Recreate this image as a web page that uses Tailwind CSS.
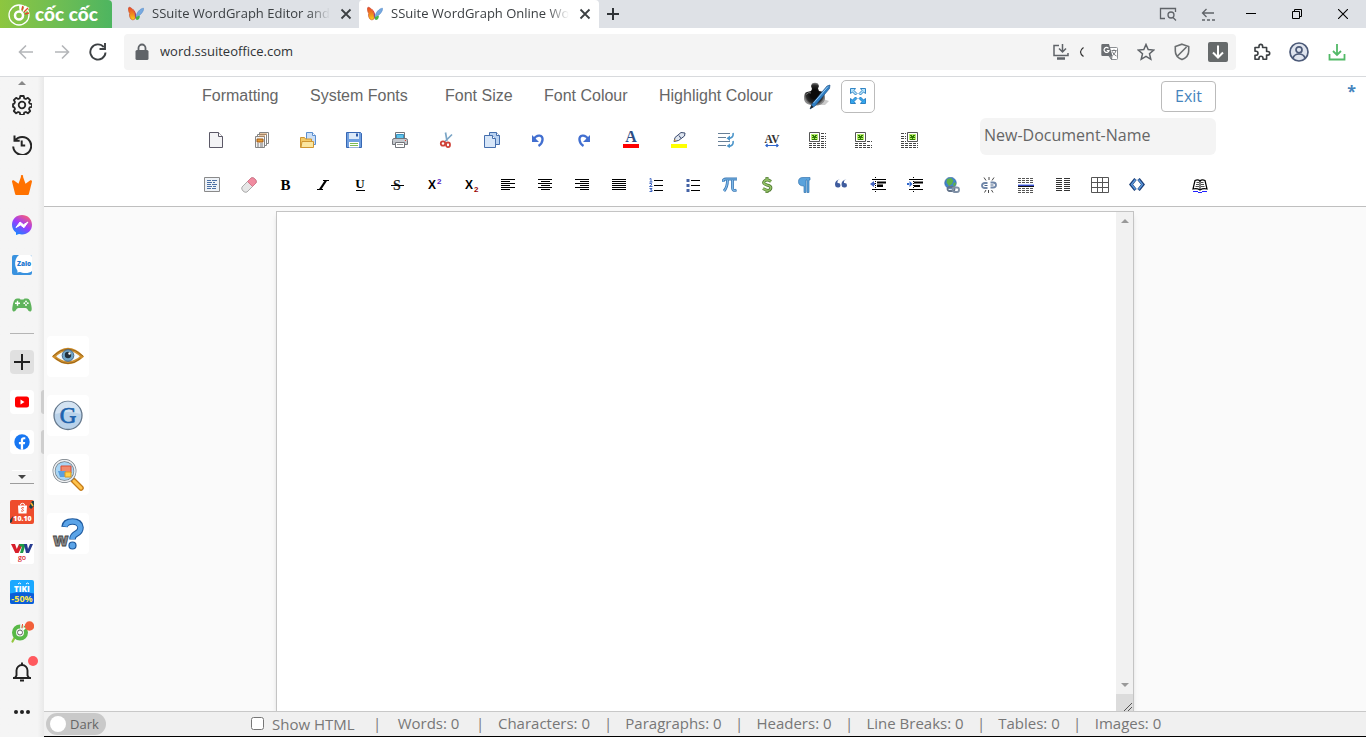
<!DOCTYPE html>
<html lang="en">
<head>
    <meta charset="UTF-8">
    <meta name="viewport" content="width=device-width, initial-scale=1.0">
    <title>SSuite WordGraph Online Word Processor</title>
    <script src="https://cdn.jsdelivr.net/npm/@tailwindcss/browser@4"></script>
</head>
<body class="flex flex-col h-screen overflow-hidden bg-white font-['Open_Sans',sans-serif] text-[#3c4043]">

<!-- Shared symbols -->
<svg class="absolute size-0" aria-hidden="true">
    <defs>
        <linearGradient id="wing" x1="0" y1="0" x2="0" y2="1"><stop offset="0" stop-color="#e8452a"/><stop offset=".55" stop-color="#f28a1e"/><stop offset="1" stop-color="#f8d21c"/></linearGradient>
    </defs>
    <symbol id="butterfly" viewBox="0 0 16 16">
        <path d="M7.500 12C7 6 4.500 1.500 1.200 1.200 0 1.200.2 5 1.700 7.500 1 9 1.800 13.500 4.500 13.800 6 13.900 7 13 7.500 12z" fill="url(#wing)" stroke="#c2462b" stroke-width=".6"/>
        <path d="M5.500 3.500C7.500 5 8.300 8 7.800 11 7 8 6.500 6 4.500 3z" fill="#e8452a"/>
        <path d="M8 11C8.500 6.500 12 2.500 15.500 2.200 16 5 13 8.500 11 9.500z" fill="#76a9e0" stroke="#4b83c4" stroke-width=".5"/>
        <path d="M8 11l3.500-1.500c1 1.500-.5 4.500-2.500 4.500-1 0-1.300-1.500-1-3z" fill="#43b649"/>
        <path d="M6.800 6C8 8 8.300 11 7.500 13.500 7.200 11 7.200 8.500 6.800 6z" fill="#7a2f86"/>
    </symbol>
    <symbol id="picture" viewBox="0 0 11 10">
        <path d="M.5.5h10v9H.5z" fill="#fff" stroke="#555"/>
        <path d="M2 2h7v6H2z" fill="#b6ec6a"/>
        <path d="M3 3h2v1H3zM6 3h2v1H6zM4 4h3v1H4zM3 5h5v1H3zM5 6h1v1H5zM3 7h5v1H3z" fill="#2d7a00"/>
    </symbol>
</svg>

<!-- Tab strip -->
<div class="flex h-7 shrink-0 bg-[#dee1e6]">
    <a href="#" class="flex items-center w-28 pl-2 gap-[3px] rounded-tr bg-linear-to-r from-[#8dc63f] to-[#4db560] text-white">
        <svg class="size-6 shrink-0" viewBox="0 0 24 24" fill="none">
            <circle cx="11" cy="13" r="10" stroke="#fff" stroke-width="1.300"/>
            <circle cx="11" cy="13.500" r="4" stroke="#fff" stroke-width="2.500"/>
            <path d="M11.500 9L11 3l3 .3-.6 5.700zM14.500 9.500L17 3.500l4.500 2.500-4 4.500z" fill="#fff"/>
            <path d="M14 8l1-4M16 10l4-4M17 12l4-1" stroke="#e8452a" stroke-width="1.400"/>
        </svg>
        <span class="font-['Lato',sans-serif] font-black text-[19px] leading-7">cốc cốc</span>
    </a>
    <div class="flex items-center w-[247px] pl-4 pr-px">
        <svg class="size-4 shrink-0"><use href="#butterfly"/></svg>
        <span class="ml-2 flex-1 overflow-hidden whitespace-nowrap text-[13px] mask-r-from-88% mask-r-to-100%">SSuite WordGraph Editor and</span>
        <button aria-label="Close tab" class="flex justify-center w-6 ml-1">
            <svg class="size-3" viewBox="0 0 12 12" stroke="#3c4043" stroke-width="1.800"><path d="M1.500 1.500l9 9M10.500 1.500l-9 9"/></svg>
        </button>
    </div>
    <div class="flex items-center w-60 pl-2 pr-0.5 rounded-t bg-white">
        <svg class="size-4 shrink-0"><use href="#butterfly"/></svg>
        <span class="ml-2 flex-1 overflow-hidden whitespace-nowrap text-[13px] mask-r-from-88% mask-r-to-100%">SSuite WordGraph Online Wo</span>
        <button aria-label="Close tab" class="flex justify-center w-6 ml-1">
            <svg class="size-3" viewBox="0 0 12 12" stroke="#3c4043" stroke-width="1.800"><path d="M1.500 1.500l9 9M10.500 1.500l-9 9"/></svg>
        </button>
    </div>
    <button aria-label="New tab" class="flex items-center justify-center w-7">
        <svg class="size-3" viewBox="0 0 12 12" stroke="#2f3337" stroke-width="2"><path d="M6 0v12M0 6h12"/></svg>
    </button>
    <div class="flex ml-auto">
        <button aria-label="Search tabs" class="flex items-center justify-center w-10">
            <svg class="w-[18px] h-3.5" viewBox="0 0 18 14" fill="none" stroke="#5f6368" stroke-width="1.300"><path d="M6 11.500H1.500v-10h15V5"/><circle cx="12" cy="8" r="3"/><path d="M14 10.500L17 13.500"/></svg>
        </button>
        <button aria-label="Reopen tab" class="flex items-center justify-center w-10">
            <svg class="w-3.5 h-3.5" viewBox="0 0 14 14" fill="none" stroke="#5f6368" stroke-width="1.300"><path d="M13 6H1.500M5.500 2l-4 4 4 4"/><path d="M1 13h13" stroke-dasharray="3 2"/></svg>
        </button>
        <button aria-label="Minimize" class="flex items-center justify-center w-[46px]">
            <svg class="size-2.5" viewBox="0 0 10 10" stroke="#000"><path d="M0 4.500h10"/></svg>
        </button>
        <button aria-label="Restore" class="flex items-center justify-center w-[46px]">
            <svg class="size-2.5" viewBox="0 0 10 10" fill="none" stroke="#000"><path d="M.5 2.500h7v7h-7zM2.500 2.500v-2h7v7h-2"/></svg>
        </button>
        <button aria-label="Close" class="flex items-center justify-center w-[46px]">
            <svg class="size-2.5" viewBox="0 0 10 10" stroke="#000" stroke-width="1.100"><path d="M0 0l10 10M10 0L0 10"/></svg>
        </button>
    </div>
</div>

<!-- Address bar -->
<div class="flex items-center h-[49px] shrink-0 pl-2 pr-2.5 border-b border-[#d8dadd]">
    <button aria-label="Back" class="flex justify-center w-9"><svg class="size-4" viewBox="0 0 16 16" fill="none" stroke="#b4b6b9" stroke-width="1.600"><path d="M15 8H2M8 1.500L1.500 8 8 14.500"/></svg></button>
    <button aria-label="Forward" class="flex justify-center w-9"><svg class="size-4" viewBox="0 0 16 16" fill="none" stroke="#b4b6b9" stroke-width="1.600"><path d="M1 8h13M8 1.500L14.500 8 8 14.500"/></svg></button>
    <button aria-label="Reload" class="flex justify-center w-9"><svg class="size-[18px]" viewBox="0 0 18 18" fill="none" stroke="#3c4043" stroke-width="1.900"><path d="M16.500 9.500A7.600 7.600 0 1 1 14.800 4.200"/><path d="M16 0v6H10.500" /></svg></button>
    <div class="flex flex-1 items-center h-9 ml-2 pl-2.5 rounded bg-[#f4f4f4]">
        <svg class="w-4 h-[18px] shrink-0" viewBox="0 0 16 18"><path d="M4.500 8V5a3.500 3.500 0 0 1 7 0v3" fill="none" stroke="#5f6368" stroke-width="1.800"/><rect x="1.500" y="7" width="13" height="10" rx="1.500" fill="#5f6368"/></svg>
        <input type="text" aria-label="Address" value="word.ssuiteoffice.com" class="flex-1 min-w-0 ml-2.5 text-[13px] text-[#303336] outline-none">
        <button aria-label="Install app" class="flex justify-center w-[22px]"><svg class="size-4" viewBox="0 0 16 16" fill="none" stroke="#5f6368" stroke-width="1.500"><path d="M6 1.500H1v10h14V9M9.500 0v7.500M6 4.500L9.500 8 13 4.500"/><path d="M4 14.500h8" stroke-width="2.500"/></svg></button>
        <span class="w-5 pl-[7px]"><svg class="w-[5px] h-2.5" viewBox="0 0 5 10" fill="none" stroke="#333" stroke-width="1.200"><path d="M4.500.5Q-1.500 5 4.500 9.500"/></svg></span>
        <button aria-label="Translate" class="flex justify-center w-9"><svg class="size-[18px]" viewBox="0 0 18 18"><path d="M6.500 4.500h9a1 1 0 0 1 1 1v10a1 1 0 0 1-1 1h-5z" fill="#fff" stroke="#8b8e92"/><path d="M1.500 1H8l3.500 12h-10A1.200 1.200 0 0 1 .3 11.800V2.200A1.200 1.200 0 0 1 1.500 1z" fill="#6b6e72"/><path d="M7.500 5.300A2.500 2.500 0 1 0 8 7.500H5.800" fill="none" stroke="#fff" stroke-width="1.200"/><path d="M10.500 7.500h5M13 6.500v1M15 7.500c-.5 2-2 4-3.500 5M11.500 8.500c.5 2 2 3.500 4 4.500M8 13l2.500 3.500.5-3.500z" fill="none" stroke="#777a7e"/></svg></button>
        <button aria-label="Bookmark" class="flex justify-center w-9"><svg class="size-[18px]" viewBox="0 0 18 18" fill="none" stroke="#5f6368" stroke-width="1.500"><path d="M9 1.500l2.200 5.100 5.500.5-4.200 3.700 1.300 5.500L9 13.400l-4.800 2.900 1.300-5.500L1.300 7.100l5.500-.5z"/></svg></button>
        <button aria-label="Ad blocker" class="flex justify-center w-9"><svg class="size-[18px]" viewBox="0 0 18 18" fill="none" stroke="#6b6e70" stroke-width="1.600"><path d="M9 1.200l6.700 2.300V8c0 4-2.800 7-6.700 8.600C5.100 15 2.300 12 2.300 8V3.500zM4.500 13L13.500 4"/></svg></button>
        <button aria-label="Download media" class="flex justify-center w-9"><svg class="size-5" viewBox="0 0 20 20" fill="none" stroke="#fff" stroke-width="2"><rect width="20" height="20" rx="2" fill="#666a6b" stroke="none"/><path d="M10 3.500v12M5 10.500l5 5 5-5"/></svg></button>
    </div>
    <button aria-label="Extensions" class="flex justify-center w-9 ml-2"><svg class="size-[18px]" viewBox="0 0 18 18" fill="none" stroke="#3c4043" stroke-width="1.600" stroke-linejoin="round"><path d="M2 4.500h4V3.200a1.800 1.800 0 0 1 3.600 0v1.300h4V8.500h1.300a1.800 1.800 0 0 1 0 3.600h-1.300v4.200H10v-1.100a2 2 0 0 0-4 0v1.100H2v-4h1a2 2 0 0 0 0-4H2z"/></svg></button>
    <button aria-label="Profile" class="flex justify-center w-[38px]"><svg class="size-5" viewBox="0 0 20 20" fill="none" stroke="#4c5a78" stroke-width="1.700"><circle cx="10" cy="10" r="9" fill="#dfe4ee"/><circle cx="10" cy="7.800" r="3"/><path d="M4 16c1-3 3.500-4 6-4s5 1 6 4"/></svg></button>
    <button aria-label="Downloads" class="flex justify-center w-[38px]"><svg class="size-[18px]" viewBox="0 0 18 18" fill="none" stroke="#52b967" stroke-width="1.800"><path d="M1.500 11v5.500h15V11M9 1v10.500M5 8l4 4 4-4"/></svg></button>
</div>

<div class="flex flex-1 min-h-0">
    <!-- Browser sidebar -->
    <aside class="flex flex-col w-11 shrink-0 bg-linear-to-r from-[#f5f5f5] from-85% to-[#e9e9e9]">
        <div class="flex justify-center items-end h-2"><svg class="w-2 h-1" viewBox="0 0 8 4"><path d="M0 4L4 0l4 4z" fill="#888"/></svg></div>
        <button aria-label="Settings" class="flex h-10 items-center justify-center"><svg class="size-5" viewBox="0 0 20 20" fill="none" stroke="#252525" stroke-width="1.800" stroke-linejoin="round"><path d="M8.300 1h3.400l.5 2.300 1.700.7 2-1.200 2.300 2.300-1.200 2 .7 1.600 2.300.5v2.600l-2.300.5-.7 1.700 1.200 2-2.300 2.300-2-1.300-1.700.7-.5 2.300H8.300l-.5-2.300-1.700-.7-2 1.300L1.800 16l1.200-2-.7-1.700-1.300-.5V9.200l1.300-.5L3 7 1.800 5.100l2.300-2.300 2 1.200 1.700-.7z"/><circle cx="10" cy="10" r="3.300"/></svg></button>
        <button aria-label="History" class="flex h-10 items-center justify-center"><svg class="size-5" viewBox="0 0 20 20" fill="none" stroke="#252525" stroke-width="2"><path d="M3 5.500A9 9 0 1 1 1.200 11.500M2.500.5v5.200h5.200M9.700 5.500V10.500h3.500"/></svg></button>
        <button aria-label="Rewards" class="flex h-10 items-center justify-center"><svg class="size-5" viewBox="0 0 20 20" fill="#ff7200"><path d="M10 0a1.300 1.300 0 0 1 1 1.800l2.500 7L18 5.500c1.200-.5 2.300.5 1.900 1.500L17 18.500c-.2 1-.8 1.500-1.500 1.500h-11c-.7 0-1.300-.5-1.500-1.500L.1 7C-.3 6 .8 5 2 5.500l4.500 3.300 2.500-7A1.300 1.300 0 0 1 10 0z"/></svg></button>
        <button aria-label="Messenger" class="flex h-10 items-center justify-center"><svg class="size-5" viewBox="0 0 20 20"><defs><linearGradient id="msg" x1=".2" y1="1" x2=".8" y2="0"><stop offset="0" stop-color="#0a8cff"/><stop offset=".5" stop-color="#9a3cff"/><stop offset="1" stop-color="#ff6070"/></linearGradient></defs><path d="M10 0c5.700 0 10 4.100 10 9.700s-4.300 9.700-10 9.700c-1 0-2-.1-3-.4L4 20v-2.500A9.500 9.500 0 0 1 0 9.700C0 4.100 4.300 0 10 0z" fill="url(#msg)"/><path d="M4 12.500L8 7l3.500 2.700L16 7l-4 5.700L8.500 10z" fill="#fff" stroke="#fff" stroke-linejoin="round"/></svg></button>
        <button aria-label="Zalo" class="flex h-10 items-center justify-center"><svg class="size-5" viewBox="0 0 20 20"><rect width="20" height="20" rx="2" fill="#3992df"/><path d="M7 0h11a2 2 0 0 1 2 2v14c-3 3-10 2-12 1l-3 .5C6 16.500 5.500 15.500 4.500 14 2 9 3 3 7 0z" fill="#fff"/><text x="5" y="11" font-family="Open Sans" font-size="6.500" font-weight="800" fill="#1b78d0">Zalo</text></svg></button>
        <button aria-label="Games" class="flex h-10 items-center justify-center"><svg class="w-5 h-3.5" viewBox="0 0 20 14"><path d="M5 .5h2.500l1 1h3l1-1H15c2.500 0 3.500 3 4.300 7C20 11 20 13.500 18 13.500c-1.800 0-2.500-3.500-4.500-3.500h-7C4.500 10 3.800 13.500 2 13.500 0 13.500 0 11 .7 7.500 1.500 3.500 2.500.5 5 .5z" fill="#5eb35c"/><path d="M5.500 2.700v5M3 5.200h5" stroke="#fff" stroke-width="1.400"/><g fill="#fff"><circle cx="14" cy="3.500" r=".9"/><circle cx="12.300" cy="5.200" r=".9"/><circle cx="15.800" cy="5.200" r=".9"/><circle cx="14" cy="7" r=".9"/></g></svg></button>
        <div class="flex items-center justify-center h-[17px]"><div class="w-6 h-px bg-[#b5b5b5]"></div></div>
        <div class="flex h-10 items-center justify-center"><button aria-label="Add" class="flex items-center justify-center size-6 rounded bg-[#e0e0e0]"><svg class="size-4" viewBox="0 0 16 16" stroke="#222" stroke-width="2"><path d="M8 0v16M0 8h16"/></svg></button></div>
        <div class="flex h-10 items-center justify-between pl-2.5"><button aria-label="YouTube" class="flex items-center justify-center size-6 rounded bg-white"><svg class="w-3.5 h-3" viewBox="0 0 14 12"><rect width="14" height="11" y=".5" rx="2.500" fill="#f00"/><path d="M5.500 3.500v5L9.500 6z" fill="#fff"/></svg></button><span class="w-[3px] h-6 rounded-l bg-[#cecece]"></span></div>
        <div class="flex h-10 items-center justify-between pl-2.5"><button aria-label="Facebook" class="flex items-center justify-center size-6 rounded bg-white"><svg class="size-4" viewBox="0 0 16 16"><circle cx="8" cy="8" r="7.700" fill="#1877f2"/><path d="M6.800 15.700v-5.400H4.900V8h1.900V6.300c0-2 1.200-3.100 3-3.100.8 0 1.500.1 1.500.1v1.900h-1c-.9 0-1.200.6-1.200 1.200V8h2.100l-.4 2.300H9.100v5.400z" fill="#fff"/></svg></button><span class="w-[3px] h-6 rounded-l bg-[#cecece]"></span></div>
        <div class="flex flex-col items-center h-[30px] pt-2"><div class="w-5 h-px bg-white"></div><svg class="w-2 h-1 mt-1" viewBox="0 0 8 4"><path d="M0 0h8L4 4z" fill="#444"/></svg><div class="w-6 h-px mt-1 bg-[#9c9c9c]"></div></div>
        <a href="#" aria-label="Shopee" class="flex h-10 shrink-0 items-center justify-center"><svg class="size-6" viewBox="0 0 24 24"><rect width="24" height="24" rx="2" fill="#ee4d2d"/><path d="M19 7l3-6h2v5l-3 3zM0 20l3-4-1 6-2 1z" fill="#1f3e46"/><path d="M21 3l2 3" stroke="#f7b52c" stroke-width="1.500"/><path d="M8 5.500h9l-.5 8h-8z" fill="#fff"/><path d="M10.300 5.500a2.200 2.200 0 0 1 4.400 0" fill="none" stroke="#fff"/><path d="M14 8c-2-1.200-3.500.3-1.500 1.300s.7 2.700-1.500 1.500" fill="none" stroke="#ee4d2d"/><text x="12.500" y="21" text-anchor="middle" font-family="Open Sans" font-size="7" font-weight="800" fill="#fff">10.10</text></svg></a>
        <a href="#" aria-label="VTV go" class="flex h-10 shrink-0 items-center justify-center"><svg class="size-6" viewBox="0 0 24 24"><rect width="24" height="24" rx="2" fill="#fff"/><path d="M1 4h4l1.800 5L9 4h4l-4.500 9H5.300z" fill="#d8212c"/><path d="M9.500 4H17v2.500h-2L13 13h-3l2-6.500h-2.500z" fill="#1d9a49"/><path d="M14 4h3l1 5 2-5h3l-4 9h-3z" fill="#273c91"/><text x="12" y="19.500" text-anchor="middle" font-family="Open Sans" font-size="7" font-weight="600" fill="#d8212c">go</text></svg></a>
        <a href="#" aria-label="Tiki" class="flex h-10 shrink-0 items-center justify-center"><svg class="size-6" viewBox="0 0 24 24"><rect width="24" height="24" rx="2" fill="#1ba8ff"/><path d="M0 13.500Q12 11 24 13.500V22a2 2 0 0 1-2 2H2a2 2 0 0 1-2-2z" fill="#0b5ed8"/><path d="M8 4q1.500-2 3 0M16 4q1.500-2 3 0" stroke="#fff" fill="none"/><text x="12" y="11.500" text-anchor="middle" font-family="Open Sans" font-size="8" font-weight="800" fill="#fff">TIKI</text><text x="12" y="22" text-anchor="middle" font-family="Open Sans" font-size="9" font-weight="700" fill="#ffe84a">-50%</text></svg></a>
        <a href="#" aria-label="Coc Coc search" class="flex h-10 shrink-0 items-center justify-center"><svg class="size-6" viewBox="0 0 24 24" fill="none"><path d="M5 17l-2.500 4.500" stroke="#93c83e" stroke-width="2.200" stroke-linecap="round"/><circle cx="10" cy="12.500" r="6" stroke="#59b947" stroke-width="4"/><circle cx="10" cy="12.500" r="2.500" fill="#fff" stroke="#666"/><path d="M11 9V5l2-1v5M13 10l4-4" stroke="#fff" stroke-width="1.500"/><path d="M12 8l.5-4" stroke="#e8452a"/><circle cx="19.500" cy="6" r="4.700" fill="#f2603a"/></svg></a>
        <button aria-label="Notifications" class="relative flex h-10 shrink-0 items-center justify-center"><svg class="size-5" viewBox="0 0 20 20" fill="none" stroke="#222" stroke-width="1.900"><path d="M1 16h18M3.500 16v-1l1-1.500V8.500a5.500 5.500 0 0 1 11 0v5l1 1.500v1M10 3V.5"/><path d="M8 18.500h4" stroke-width="2"/></svg><span class="absolute top-1 right-1.5 size-2.5 rounded-full bg-[#ff5a5f]"></span></button>
        <button aria-label="More" class="flex h-10 shrink-0 items-center justify-center"><svg class="w-4 h-1" viewBox="0 0 16 4" fill="#222"><circle cx="2" cy="2" r="2"/><circle cx="8" cy="2" r="2"/><circle cx="14" cy="2" r="2"/></svg></button>
    </aside>

    <div class="flex flex-col flex-1 min-w-0">
        <!-- Editor toolbar -->
        <header class="relative shrink-0 pb-px bg-white border-b border-[#bfbfbf]">
            <span class="absolute top-1 right-2.5 text-base font-bold leading-5 text-[#4584bd]">*</span>
            <div class="max-w-[1026px] mx-auto">
                <div class="flex items-center h-[38px] pl-2.5 pr-0.5 font-['Liberation_Sans',Arial,sans-serif] text-base text-[#666]">
                    <select aria-label="Formatting" class="appearance-none w-[108px]"><option>Formatting</option></select>
                    <select aria-label="System Fonts" class="appearance-none w-[135px]"><option>System Fonts</option></select>
                    <select aria-label="Font Size" class="appearance-none w-[99px]"><option>Font Size</option></select>
                    <select aria-label="Font Colour" class="appearance-none w-[115px]"><option>Font Colour</option></select>
                    <select aria-label="Highlight Colour" class="appearance-none w-[136px]"><option>Highlight Colour</option></select>
                    <button aria-label="Ink" class="w-[46px] pl-2">
                        <svg class="size-7" viewBox="0 0 28 28"><defs><radialGradient id="ink"><stop offset=".4" stop-color="#0a0a0a"/><stop offset=".8" stop-color="#2e2e2e"/><stop offset="1" stop-color="#8a8a8a"/></radialGradient></defs><path d="M10 23h12l4-4-6-2z" fill="#ccc"/><path d="M8 4l1-2.500Q12 0 15 1.500L16 4l-1 2.500 1 2.500c4 0 6.500 3 6 8-1 5-6 7-11 6.500C5 23 1 21 1 16c0-4 1-5.500 3-6l4-1 1-2z" fill="url(#ink)"/><path d="M3 12.500q3-3 5-1.500" stroke="#777" fill="none"/><path d="M7 27l2-5L24 4l3-1-.5 3.500L12 24z" fill="#2f7fc4" stroke="#174a80" stroke-width=".6"/><path d="M10.500 21L25 4.500" stroke="#9bcbf2"/><path d="M7 27l1.500-4 2 2z" fill="#222"/></svg>
                    </button>
                    <button aria-label="Full screen" class="flex items-center justify-center w-[34px] h-[33px] border border-[#bbb] rounded-[5px]">
                        <svg class="size-4" viewBox="0 0 16 16" stroke="#1f78be" stroke-width=".9"><path d="M.5.500h5L4 2.500l3 3L5.500 7l-3-3-2 1.500zM15.500.5v5L13.500 4l-3 3L9 5.500l3-3L10.500.5z" fill="#b5e2fa"/><path d="M.5 15.500v-5l2 1.500 3-3L7 10.500l-3 3 1.500 2zM15.500 15.500h-5l1.500-2-3-3L10.500 9l3 3 2-1.500z" fill="#35a7ee"/></svg>
                    </button>
                    <button class="ml-auto w-[55px] h-[31px] border border-[#bbb] rounded font-['Open_Sans',sans-serif] text-base text-[#4584bd]">Exit</button>
                </div>

                <div class="flex h-[50px] pl-px pr-0.5">
                    <button aria-label="New" class="flex items-center justify-center w-[46px]"><svg class="size-4" viewBox="0 0 16 16"><path d="M1.500.5h9l4 4v11h-13z" fill="#f3f3f5" stroke="#5b5866"/><path d="M10.500.5v4h4" fill="#fff" stroke="#5b5866"/></svg></button>
                    <button aria-label="Templates" class="flex items-center justify-center w-[46px]"><svg class="size-4" viewBox="0 0 16 16" stroke="#858585"><path d="M5.500.5h9v11h-9z" fill="#fff"/><path d="M3.500 2.500h9v11h-9z" fill="#fff"/><path d="M1.500 4.500h9v11h-9z" fill="#f2f2f2"/><path d="M6 2h7M5 4h6" stroke="#c98a4a"/><path d="M3 7h6v3H3z" fill="#e79e33" stroke="#a05a18"/><path d="M3 12h2m1 0h3M3 14h2m1 0h3" stroke="#777"/></svg></button>
                    <button aria-label="Open" class="flex items-center justify-center w-[46px]"><svg class="size-4" viewBox="0 0 16 16"><path d="M6.500.5h6l3 3v9h-9z" fill="#cbdff7" stroke="#5b8fd0"/><path d="M12.500.5v3h3" fill="#fff" stroke="#5b8fd0"/><path d="M.5 15.500v-10h4l1 1.500h6v8.500z" fill="#f3cb68" stroke="#cf9632"/><path d="M1 15.500l1-6h11.500v6z" fill="#fbe6a0" stroke="#cf9632"/></svg></button>
                    <button aria-label="Save" class="flex items-center justify-center w-[46px]"><svg class="size-4" viewBox="0 0 16 16"><path d="M.5.5h14l1 1v14H.5z" fill="#6f9fe0" stroke="#3767b3"/><path d="M3 1h10v6H3z" fill="#dce9f8"/><path d="M10 1.500h2v3h-2z" fill="#2b58a5"/><path d="M3 10h10v5.500H3z" fill="#fff"/><path d="M4 11.500h8M4 13.500h8" stroke="#7dbb54"/></svg></button>
                    <button aria-label="Print" class="flex items-center justify-center w-[46px]"><svg class="size-4" viewBox="0 0 16 16" stroke="#71747a"><path d="M3.500 7V.5h9V7" fill="#fff"/><path d="M4.500 2.500h7V7h-7z" fill="#5fc3ec" stroke="#3893c0"/><path d="M2 6.500h12q1.500 0 1.500 2v4H.5v-4q0-2 1.500-2z" fill="#c5c8cd"/><path d="M3.500 10.500h9v5h-9z" fill="#fff"/><path d="M5 12.500h6" stroke="#999"/><path d="M13 8.500h1" stroke="#e04030"/></svg></button>
                    <button aria-label="Cut" class="flex items-center justify-center w-[46px]"><svg class="size-4" viewBox="0 0 16 16" fill="none"><path d="M7.500.5L9 9M14 2.500L7 9.500" stroke="#7ca6c6" stroke-width="1.700"/><circle cx="5" cy="11.500" r="2.200" stroke="#cf4238" stroke-width="1.800"/><ellipse cx="10" cy="12.700" rx="2" ry="2.400" stroke="#cf4238" stroke-width="1.800"/></svg></button>
                    <button aria-label="Copy" class="flex items-center justify-center w-[46px]"><svg class="size-4" viewBox="0 0 16 16" stroke="#456fae"><path d="M5.500.5h7l3 3v9h-10z" fill="#b9d2f1"/><path d="M12.500.5v3h3" fill="#fff"/><path d="M.5 3.500h8l3 3v9H.5z" fill="#d7e6f8"/><path d="M8.500 3.500v3h3" fill="#fff"/></svg></button>
                    <button aria-label="Undo" class="flex items-center justify-center w-[46px]"><svg class="size-4" viewBox="0 0 16 16" fill="none"><path d="M3.500 7.500C7 1.500 13 3 12.500 8c-.3 2.500-1.500 4.500-4 6" stroke="#426fd0" stroke-width="2.400"/><path d="M2 3v7h7z" fill="#426fd0"/></svg></button>
                    <button aria-label="Redo" class="flex items-center justify-center w-[46px]"><svg class="size-4" viewBox="0 0 16 16" fill="none"><path d="M12.500 7.500C9 1.500 3 3 3.500 8c.3 2.500 1.500 4.500 4 6" stroke="#426fd0" stroke-width="2.400"/><path d="M14 3v7H7z" fill="#426fd0"/></svg></button>
                    <button aria-label="Text colour" class="flex items-center justify-center w-12"><svg class="size-4 overflow-visible" viewBox="0 0 16 16"><text x="8" y="10" text-anchor="middle" font-family="Liberation Serif" font-size="16" font-weight="700" fill="#2d4d86">A</text><path d="M0 12h16v4H0z" fill="#f00"/></svg></button>
                    <button aria-label="Highlight" class="flex items-center justify-center w-12"><svg class="size-4" viewBox="0 0 16 16"><path d="M3 9.500l1-4L10 .5l4 .5-.5 3-6 4.500z" fill="#dfe6f0" stroke="#3b4a6e"/><path d="M8 3.500l2 3" stroke="#3b4a6e"/><path d="M3 9.500L3.700 7l1.800 1.500z" fill="#e2a33c"/><path d="M0 12h16v4H0z" fill="#ff0"/></svg></button>
                    <button aria-label="Line spacing" class="flex items-center justify-center w-[46px]"><svg class="size-4" viewBox="0 0 16 16" fill="none"><path d="M0 1.500h12M0 5.500h8M0 9.500h12M0 13.500h8" stroke="#667e96"/><path d="M15 1q1 5-5 5.500M15 9q1 5-5 5.500" stroke="#4a94c9" stroke-width="1.600"/><path d="M12 3.500v5.500L8.500 6.300zM12 11.500v4.500L8.500 14z" fill="#4a94c9"/></svg></button>
                    <button aria-label="Character spacing" class="flex items-center justify-center w-[46px]"><svg class="size-4" viewBox="0 0 16 16"><text x="8" y="11" text-anchor="middle" font-family="Liberation Serif" font-size="11.500" font-weight="700" fill="#333">AV</text><path d="M2 13.500h12M3 12v3M13 12v3" stroke="#2f66cc"/><path d="M1 13.500l2.500-2v4zM15 13.500l-2.500-2v4z" fill="#2f66cc"/></svg></button>
                    <button aria-label="Picture left" class="flex items-center justify-center w-[46px]"><svg class="w-[18px] h-4" viewBox="0 0 18 16"><use href="#picture" width="11" height="10"/><path d="M12 1.500h5M12 4.500h5M12 6.500h5M12 9.500h5M0 11.500h17M0 13.500h17M0 15.500h17" stroke="#444" stroke-dasharray="3 1"/></svg></button>
                    <button aria-label="Picture inline" class="flex items-center justify-center w-[46px]"><svg class="w-[18px] h-4" viewBox="0 0 18 16"><use href="#picture" width="11" height="10"/><path d="M12 9.500h5M0 11.500h12M0 13.500h17M0 15.500h17" stroke="#444" stroke-dasharray="3 1"/></svg></button>
                    <button aria-label="Picture right" class="flex items-center justify-center w-[46px]"><svg class="w-[18px] h-4" viewBox="0 0 18 16"><use href="#picture" x="6" width="11" height="10"/><path d="M0 1.500h5M0 4.500h5M0 6.500h5M0 9.500h5M0 11.500h17M0 13.500h17M0 15.500h17" stroke="#444" stroke-dasharray="3 1"/></svg></button>
                    <input type="text" aria-label="Document name" value="New-Document-Name" class="ml-auto mt-[3px] w-[236px] h-[37px] pl-1 pb-1 rounded-md bg-[#f4f4f4] text-base text-[#666]">
                </div>

                <div class="flex h-10 pl-px">
                    <button aria-label="Select all" class="flex items-center justify-center w-[37px]"><svg class="size-4" viewBox="0 0 16 16"><path d="M.5.5h15v14H.5z" fill="#eef2f7" stroke="#8a8a8a"/><path d="M3 3.500h4m1 0h5M3 5.500h5m1 0h2M3 7.500h4m1 0h5M3 9.500h5m1 0h3M3 11.500h4m1 0h4" stroke="#4a70a5"/></svg></button>
                    <button aria-label="Clear formatting" class="flex items-center justify-center w-[37px]"><svg class="size-4" viewBox="0 0 16 16"><path d="M1 10L10 1q2-1 4 1t1 4l-9 9q-2 1-4-1t-1-4z" fill="#e6e6e6" stroke="#aaa"/><path d="M6.500 4.500L10 1q2-1 4 1t1 4l-3.500 3.500z" fill="#f08ba0" stroke="#d5798c"/></svg></button>
                    <button aria-label="Bold" class="flex items-center justify-center w-[37px] text-black font-['Liberation_Serif',serif] font-bold text-[15px]">B</button>
                    <button aria-label="Italic" class="flex items-center justify-center w-[37px]"><svg class="w-3 h-2.5" viewBox="0 0 12 10" stroke="#000"><path d="M6 .5h6M0 9.500h6"/><path d="M9 .5l-6 9" stroke-width="2.200"/></svg></button>
                    <button aria-label="Underline" class="flex items-center justify-center w-[37px]"><svg class="w-3 h-3" viewBox="0 0 12 12"><text x="6" y="9" text-anchor="middle" font-family="Liberation Serif" font-size="13" font-weight="700">U</text><path d="M2 11.500h9" stroke="#000"/></svg></button>
                    <button aria-label="Strikethrough" class="flex items-center justify-center w-[37px]"><svg class="w-3.5 h-3.5" viewBox="0 0 14 14"><text x="7" y="11.500" text-anchor="middle" font-family="Liberation Serif" font-size="14" font-weight="700" fill="#222">S</text><path d="M1 7.500h13" stroke="#000"/></svg></button>
                    <button aria-label="Superscript" class="flex items-center justify-center w-[37px]"><svg class="w-4 h-4" viewBox="0 0 16 16" font-family="Liberation Sans" font-weight="700"><text x="2" y="12" font-size="12">X</text><text x="11" y="7" font-size="8" fill="#5020c0">2</text></svg></button>
                    <button aria-label="Subscript" class="flex items-center justify-center w-[37px]"><svg class="w-4 h-4" viewBox="0 0 16 16" font-family="Liberation Sans" font-weight="700"><text x="2" y="12" font-size="12">X</text><text x="11" y="15" font-size="8" fill="#900">2</text></svg></button>
                    <button aria-label="Align left" class="flex items-center justify-center w-[37px]"><svg class="w-3.5 h-3" viewBox="0 0 14 12" stroke="#000"><path d="M0 .5h14M0 2.500h9M0 4.500h14M0 6.500h9M0 8.500h14M0 10.500h9"/></svg></button>
                    <button aria-label="Align centre" class="flex items-center justify-center w-[37px]"><svg class="w-3.5 h-3" viewBox="0 0 14 12" stroke="#000"><path d="M0 .5h14M3 2.500h9M0 4.500h14M3 6.500h9M0 8.500h14M3 10.500h9"/></svg></button>
                    <button aria-label="Align right" class="flex items-center justify-center w-[37px]"><svg class="w-3.5 h-3" viewBox="0 0 14 12" stroke="#000"><path d="M0 .5h14M5 2.500h9M0 4.500h14M5 6.500h9M0 8.500h14M5 10.500h9"/></svg></button>
                    <button aria-label="Justify" class="flex items-center justify-center w-[37px]"><svg class="w-3.5 h-3" viewBox="0 0 14 12" stroke="#000"><path d="M0 .5h14M0 2.500h14M0 4.500h14M0 6.500h14M0 8.500h14M0 10.500h14"/></svg></button>
                    <button aria-label="Numbered list" class="flex items-center justify-center w-[37px]"><svg class="w-3.5 h-3.5" viewBox="0 0 14 14"><path d="M5 2.500h9M5 7.500h9M5 12.500h9" stroke="#000"/><path d="M.5 1L2 .5V4M.5 4h3M.5 5.500h2v1.500L.5 8.500h3M.5 10.500H3L1.500 12H3v1.500H.5" fill="none" stroke="#3b62c0"/></svg></button>
                    <button aria-label="Bulleted list" class="flex items-center justify-center w-[37px]"><svg class="w-3.5 h-3.5" viewBox="0 0 14 14"><path d="M5 2.500h9M5 7.500h9M5 12.500h9" stroke="#000"/><path d="M.5 1h3v3h-3zM.5 6h3v3h-3zM.5 11h3v3h-3z" fill="#4463a5"/></svg></button>
                    <button aria-label="Equation" class="flex items-center justify-center w-[37px]"><svg class="size-4" viewBox="0 0 16 16" fill="none"><path d="M1 5q0-3 3-3h11M5.500 3q0 7-3.500 11M10.500 3v8q0 3.500 4 2" stroke="#3c78b4" stroke-width="2.800"/><path d="M1 5q0-3 3-3h11M5.500 3q0 7-3.500 11M10.500 3v8q0 3.500 4 2" stroke="#7fb9e8" stroke-width="1.200"/></svg></button>
                    <button aria-label="Currency" class="flex items-center justify-center w-[37px]"><svg class="size-4" viewBox="0 0 16 16" fill="none"><path d="M12 4.500Q8 1.500 5.500 4T8 8q5 1 3.500 4T4 11.500M8 0v3M8 13v3" stroke="#4d7630" stroke-width="3"/><path d="M12 4.500Q8 1.500 5.500 4T8 8q5 1 3.500 4T4 11.500M8 .5v3M8 13v2.500" stroke="#93c266" stroke-width="1.500"/></svg></button>
                    <button aria-label="Paragraph marks" class="flex items-center justify-center w-[37px]"><svg class="size-4" viewBox="0 0 16 16"><path d="M14 .5V3h-1v12.500h-2V3h-1v12.500H8V9Q2.500 9 2.500 4.700T7 .5z" fill="#5aa2dc" stroke="#3676b0" stroke-width=".7"/></svg></button>
                    <button aria-label="Quote" class="flex items-center justify-center w-[37px]"><svg class="w-3 h-4" viewBox="0 0 12 16" fill="#3f5c9e"><path d="M5 2Q2 3 2.500 6q3-.3 3 2.300T2.800 10.500Q0 10.500 0 7t5-5zM11.500 2Q8.500 3 9 6q3-.3 3 2.300T9.300 10.500Q6.500 10.500 6.500 7t5-5z"/></svg></button>
                    <button aria-label="Outdent" class="flex items-center justify-center w-[37px]"><svg class="size-4" viewBox="0 0 16 16"><path d="M2 2.500h14M7 9.500h6M2 12.500h14" stroke="#000"/><path d="M7 5.500h9M7 8.500h6" stroke="#000" stroke-width="2"/><path d="M5.500 0v16" stroke="#000" stroke-dasharray="1 1"/><path d="M0 7l4-3v6zM3 6h2v2H3z" fill="#4463c0"/></svg></button>
                    <button aria-label="Indent" class="flex items-center justify-center w-[37px]"><svg class="size-4" viewBox="0 0 16 16"><path d="M2 2.500h14M2 12.500h14" stroke="#000"/><path d="M7 5.500h9M7 9h6" stroke="#000" stroke-width="2"/><path d="M6.500 0v16" stroke="#000" stroke-dasharray="1 1"/><path d="M5.500 7l-3-3v6zM0 6h3v2H0z" fill="#2f66cc"/></svg></button>
                    <button aria-label="Insert link" class="flex items-center justify-center w-[37px]"><svg class="size-4" viewBox="0 0 16 16"><circle cx="6.500" cy="6" r="5.800" fill="#3f83cc" stroke="#34649c" stroke-width=".6"/><path d="M3 2l4-1 2.500 2.500L8 7 5 9 2.500 5.500zM9 7l2-2 1 2-2 3z" fill="#5fb04a"/><rect x="3.500" y="10" width="7" height="4" rx="2" fill="none" stroke="#62738a" stroke-width="1.800"/><rect x="8.500" y="10.500" width="6.500" height="4.500" rx="2" fill="none" stroke="#7f90a6" stroke-width="1.800"/></svg></button>
                    <button aria-label="Remove link" class="flex items-center justify-center w-[37px]"><svg class="size-4" viewBox="0 0 16 16" fill="none"><path d="M6.500 6H4q-3 0-3 2.500T4 11h2.500M9.500 5.500H12q3 0 3 2.500T12 10.500H9.500" stroke="#6f86a8" stroke-width="1.800"/><path d="M3.500 8.500h3M9.500 8h3" stroke="#4b6488"/><path d="M8 0v3M3 .5l2 3M13 .5l-2 3M7.500 13v3M3.500 15.500l1.500-2.500M12 15.500L10.500 13" stroke="#333" stroke-width=".9"/></svg></button>
                    <button aria-label="Page break" class="flex items-center justify-center w-[37px]"><svg class="size-4" viewBox="0 0 16 16"><path d="M0 1.500h16M0 3.500h16M0 5.500h16M0 11.500h16M0 13.500h16M0 15.500h16" stroke="#555" stroke-dasharray="3 1"/><path d="M0 7h16v3H0z" fill="#a9bdf8"/><path d="M0 8.500h16" stroke="#3648c8"/><path d="M0 9.500h16" stroke="#111"/></svg></button>
                    <button aria-label="Columns" class="flex items-center justify-center w-[37px]"><svg class="w-3.5 h-4" viewBox="0 0 14 16" stroke="#333"><path d="M0 1.500h6m2 0h6M0 3.500h6m2 0h6M0 5.500h6m2 0h6M0 7.500h6m2 0h6M0 9.500h6m2 0h6M0 11.500h6m2 0h6M0 13.500h6m2 0h6"/></svg></button>
                    <button aria-label="Table" class="flex items-center justify-center w-[37px]"><svg class="w-[18px] h-4" viewBox="0 0 18 16" fill="#fff" stroke="#555"><path d="M.5.5h17v15H.5zM.5 5.500h17M.5 10.500h17M6.500.5v15M11.500.5v15"/></svg></button>
                    <button aria-label="Source" class="flex items-center justify-center w-[37px]"><svg class="size-4" viewBox="0 0 16 16" fill="none"><path d="M6.500 2L2 7.500 6.500 13M9.500 2L14 7.500 9.500 13" stroke="#1d3f78" stroke-width="3.200"/><path d="M6.500 2.500l-4 5 4 5M9.500 2.500l4 5-4 5" stroke="#5c9be0" stroke-width="1.300"/></svg></button>
                    <button aria-label="Dictionary" class="flex items-center justify-center w-[37px] ml-[26px]"><svg class="size-4" viewBox="0 0 16 16"><path d="M1 12l2-8.500q3-1.500 5 .5 2-2 5-.5l2 8.500q-4-1-7 1-3-2-7-1z" fill="#fff" stroke="#000" stroke-width="1.200"/><path d="M8 4v9" stroke="#000"/><path d="M4.500 5.500H7M4 7.500h3M3.500 9.500H7M9 5.500h2.500M9 7.500h3M9 9.500h3.500" stroke="#000" stroke-width=".7"/><path d="M1 14.500h5m4 0h5M6 15.500h4" stroke="#22f"/></svg></button>
                </div>
            </div>
        </header>

        <!-- Document area -->
        <main class="grid grid-cols-[1fr_858px_1fr] flex-1 min-h-0 bg-[#fafafa]">
            <div class="flex flex-col justify-center gap-[18px] pl-[3px] pb-7">
                <button aria-label="Preview" class="flex items-center justify-center w-[42px] h-[41px] rounded-sm bg-white"><svg class="size-8" viewBox="0 0 32 32"><path d="M2 15.500Q16 1 30 15.500 16 28 2 15.500z" fill="#f4fafd" stroke="#cf8f2c" stroke-width="3"/><path d="M1 15Q16 1 31 15M3.500 17.500Q16 27.500 28.500 17.500" fill="none" stroke="#8b5a17" stroke-width=".8"/><circle cx="16" cy="14.500" r="5.800" fill="#6fa6c9" stroke="#46688a"/><circle cx="16" cy="14" r="3.200" fill="#22303c"/><circle cx="17.500" cy="12.500" r="1.200" fill="#fff"/></svg></button>
                <button aria-label="Google" class="flex items-center justify-center w-[42px] h-[41px] rounded-sm bg-white"><svg class="size-8" viewBox="0 0 32 32"><circle cx="16" cy="15.500" r="14" fill="#b9d2ea" stroke="#65788c" stroke-width="1.300"/><path d="M3.500 14a12.500 12.500 0 0 1 25 0q-12-4-25 0z" fill="#d4e3f2"/><text x="16" y="23" text-anchor="middle" font-family="Liberation Serif" font-size="23" font-weight="400" fill="#1f64ae" stroke="#1f64ae" stroke-width=".7">G</text></svg></button>
                <button aria-label="Search images" class="flex items-center justify-center w-[42px] h-[41px] rounded-sm bg-white"><svg class="size-8" viewBox="0 0 32 32"><path d="M21 21l8 8" stroke="#c47b18" stroke-width="5.500" stroke-linecap="round"/><path d="M22 22l7 7" stroke="#ffc34d" stroke-width="3" stroke-linecap="round"/><circle cx="12.500" cy="12" r="10.500" fill="#a9d6f5" stroke="#6f7880" stroke-width="2.800"/><circle cx="12.500" cy="12" r="10.500" fill="none" stroke="#eef0f2" stroke-width="1.500"/><path d="M9 7h10v7H9z" fill="#f08a6c" stroke="#d84d34"/><path d="M6 12h8v6H8z" fill="#5a9fe0"/><path d="M13 13h6v5h-6z" fill="#ffd04a" stroke="#dc9a20"/></svg></button>
                <button aria-label="Help" class="flex items-center justify-center w-[42px] h-[41px] rounded-sm bg-white"><svg class="size-8" viewBox="0 0 32 32"><text x="1" y="28" font-family="Open Sans" font-size="17" font-weight="800" fill="#8a8a8a" stroke="#444" stroke-width=".8">w</text><path d="M12.500 9Q13 3.500 20.500 3.500T28.500 9.500q0 4-4 6-4 2-4 6" fill="none" stroke="#1c579c" stroke-width="6.500"/><path d="M13 8.500Q14 3.500 20.500 3.500T28.500 9.500q0 4-4 6-4 2-4 5.500" fill="none" stroke="#5ba4e8" stroke-width="4.500"/><circle cx="20.500" cy="27.500" r="3.500" fill="#5ba4e8" stroke="#1c579c" stroke-width="1.200"/></svg></button>
            </div>
            <div class="flex mt-1 border border-b-0 border-[#c4c4c4] bg-white shadow-md">
                <textarea aria-label="Document" class="flex-1 resize-none outline-none p-4"></textarea>
                <div class="flex flex-col items-center w-[17px] bg-[#f1f1f1]">
                    <svg class="w-2 h-1 mt-[7px]" viewBox="0 0 8 4"><path d="M0 4L4 0l4 4z" fill="#999"/></svg>
                    <svg class="w-2 h-1 mt-auto mb-[7px]" viewBox="0 0 8 4"><path d="M0 0h8L4 4z" fill="#999"/></svg>
                    <div class="flex items-end justify-end size-[17px] bg-[#dcdcdc]"><svg class="size-2.5" viewBox="0 0 10 10" stroke="#555"><path d="M1 10l8-8M5 10l4-4"/></svg></div>
                </div>
            </div>
        </main>

        <!-- Status bar -->
        <footer class="flex items-center h-[26px] shrink-0 bg-[#f0f0f0] border-t border-t-[#c8c8c8] border-b border-b-black text-[15px] leading-[22px] text-[#777] whitespace-nowrap">
            <div class="w-[207px] shrink-0 pl-0.5">
                <label class="flex items-center w-[60px] h-[22px] pl-1 gap-1 rounded-full bg-[#c9c9c9] text-[13px] text-[#666]">
                    <input type="checkbox" class="appearance-none size-4 rounded-full bg-white">Dark
                </label>
            </div>
            <label class="flex items-center gap-2 w-[122px] shrink-0 pb-px"><input type="checkbox" class="size-[13px]">Show HTML</label>
            <div class="flex pb-0.5">
                <span class="w-2 text-center">|</span><span class="w-[95px] text-center">Words: 0</span>
                <span class="w-2 text-center">|</span><span class="w-[120px] text-center">Characters: 0</span>
                <span class="w-2 text-center">|</span><span class="w-[123px] text-center">Paragraphs: 0</span>
                <span class="w-2 text-center">|</span><span class="w-[102px] text-center">Headers: 0</span>
                <span class="w-2 text-center">|</span><span class="w-[124px] text-center">Line Breaks: 0</span>
                <span class="w-2 text-center">|</span><span class="w-[88px] text-center">Tables: 0</span>
                <span class="w-2 text-center">|</span><span class="w-[94px] text-center">Images: 0</span>
            </div>
        </footer>
    </div>
</div>

</body>
</html>
